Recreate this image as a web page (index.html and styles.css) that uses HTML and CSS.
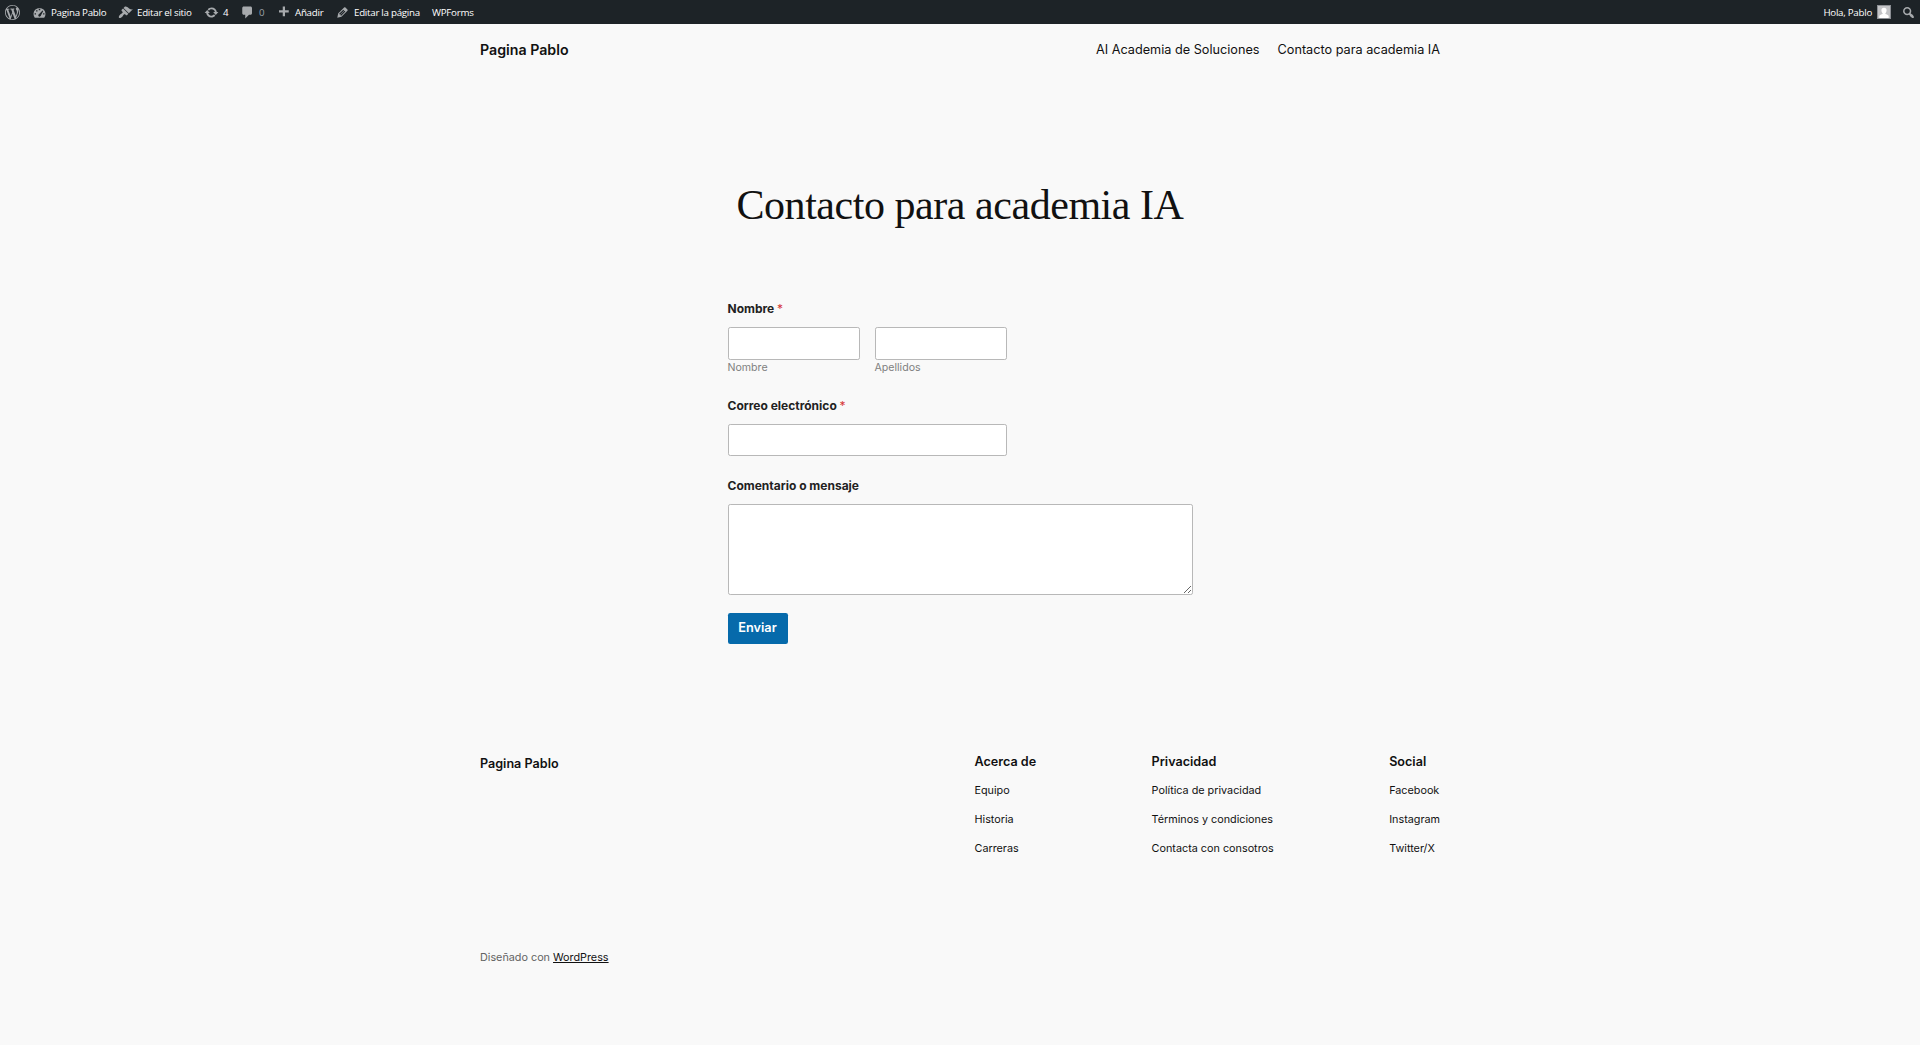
FILE: index.html
```
<!DOCTYPE html>
<html lang="es">
<head>
<meta charset="utf-8">
<title>Contacto para academia IA</title>
<link rel="stylesheet" href="styles.css">
</head>
<body>
<nav class="adminbar">
  <a class="item logo"><svg viewBox="0 0 20 20"><path d="M20 10c0-5.51-4.49-10-10-10C4.48 0 0 4.49 0 10c0 5.52 4.48 10 10 10 5.51 0 10-4.48 10-10zM7.78 15.37L4.37 6.22c.55-.02 1.17-.08 1.17-.08.5-.06.44-1.13-.06-1.11 0 0-1.45.11-2.37.11-.18 0-.37 0-.58-.01C4.12 2.69 6.87 1.11 10 1.11c2.33 0 4.45.87 6.05 2.34-.68-.11-1.65.39-1.65 1.58 0 .74.45 1.36.9 2.1.35.61.55 1.36.55 2.46 0 1.49-1.4 5-1.4 5l-3.03-8.37c.54-.02.82-.17.82-.17.5-.05.44-1.25-.06-1.22 0 0-1.44.12-2.38.12-.87 0-2.33-.12-2.33-.12-.5-.03-.56 1.2-.06 1.22l.92.08 1.26 3.41zM17.41 10c.24-.64.74-1.87.43-4.25.7 1.29 1.05 2.71 1.05 4.25 0 3.29-1.73 6.24-4.4 7.78.97-2.59 1.94-5.2 2.92-7.78zM6.1 18.09C3.12 16.65 1.11 13.53 1.11 10c0-1.3.23-2.48.72-3.59C3.25 10.3 4.67 14.2 6.1 18.09zm4.03-6.63l2.58 6.98c-.86.29-1.76.45-2.71.45-.79 0-1.57-.11-2.29-.33.81-2.38 1.62-4.74 2.42-7.1z"/></svg></a>
  <a class="item site"><svg viewBox="0 0 20 20"><path fill-rule="evenodd" d="M3.760 17h12.480A8 8 0 1 0 3.760 17zM9 5h2v2H9zM5.500 7h1.800v1.800H5.500zM14 7.200l1 .8-3 5.500A1.800 1.800 0 1 1 9.600 12zM3.500 11h1.800v1.800H3.500zM14.800 11h1.800v1.800h-1.800z"/></svg><span>Pagina Pablo</span></a>
  <a class="item edit-site"><svg viewBox="0 0 20 20"><path d="M14.48 11.06L7.41 3.99l1.5-1.5c.5-.56 2.3-.47 3.51.32 1.21.8 1.43 1.28 2.91 2.1 1.18.64 2.45 1.26 4.45.85zm-.71.71L6.7 4.7 4.93 6.47c-.39.39-.39 1.02 0 1.41l1.06 1.06c.39.39.39 1.03 0 1.42-.6.6-1.43 1.11-2.21 1.69-.35.26-.7.53-1.01.84C1.43 14.23.4 16.08 1.4 17.07c.99 1 2.84-.03 4.18-1.36.31-.31.58-.66.85-1.02.57-.78 1.08-1.61 1.69-2.21.39-.39 1.02-.39 1.41 0l1.06 1.06c.39.39 1.02.39 1.41 0z"/></svg><span>Editar el sitio</span></a>
  <a class="item updates"><svg viewBox="0 0 20 20"><path d="M10.2 3.28c3.53 0 6.43 2.61 6.92 6h2.08l-3.5 4-3.5-4h2.32c-.45-1.97-2.21-3.45-4.32-3.45-1.45 0-2.73.71-3.54 1.78L4.95 5.66C6.23 4.2 8.11 3.28 10.2 3.28zm-.4 13.44c-3.52 0-6.43-2.61-6.92-6H.8l3.5-4c1.17 1.33 2.33 2.67 3.5 4H5.48c.45 1.97 2.21 3.45 4.32 3.45 1.45 0 2.73-.71 3.54-1.78l1.71 1.95c-1.28 1.46-3.15 2.38-5.25 2.38z"/></svg><span>4</span></a>
  <a class="item comments"><svg viewBox="0 0 20 20"><path d="M5 2h9c1.100 0 2 .9 2 2v7c0 1.100-.9 2-2 2h-2l-5 5v-5H5c-1.100 0-2-.9-2-2V4c0-1.100.9-2 2-2z"/></svg><span>0</span></a>
  <a class="item add"><svg viewBox="0 0 20 20"><path d="M17 7v3h-5v5H9v-5H4V7h5V2h3v5h5z"/></svg><span>Añadir</span></a>
  <a class="item edit-page"><svg viewBox="0 0 20 20"><path d="M13.89 3.39l2.71 2.72c.46.46.42 1.24.03 1.64l-8.01 8.02-5.56 1.16 1.16-5.58s7.6-7.63 7.99-8.03c.39-.39 1.22-.39 1.68.07zm-2.73 2.79l-5.59 5.61 1.11 1.11 5.54-5.65zm-2.97 8.23l5.58-5.6-1.07-1.08-5.59 5.6z"/></svg><span>Editar la página</span></a>
  <a class="item wpforms">WPForms</a>
  <a class="item account">Hola, Pablo<svg class="avatar" viewBox="0 0 18 18"><path class="avatar-frame" d="M0 0h18v18H0z"/><path class="avatar-back" d="M1.300 1.300h15.400v15.400H1.300z"/><path class="avatar-person" d="M9 3.500a3.300 3.300 0 0 1 3.300 3.500c0 1.600-.7 2.700-1.500 3.500v1c1.500.6 3.700 1.200 4.200 2.700v2.500H3v-2.500c.5-1.500 2.700-2.100 4.200-2.700v-1C6.400 9.700 5.700 8.600 5.700 7A3.300 3.300 0 0 1 9 3.500z"/></svg></a>
  <a class="item search"><svg viewBox="0 0 20 20"><path d="M12.14 4.18c1.87 1.87 2.11 4.75.72 6.89.12.1.22.21.36.31.2.16.47.36.81.59.34.24.56.39.66.47.42.31.73.57.94.78.32.32.6.65.84 1 .25.35.44.69.59 1.04.14.35.21.68.18 1-.02.32-.14.59-.36.81s-.49.34-.81.36c-.31.02-.65-.04-.99-.19-.35-.14-.7-.34-1.04-.59-.35-.24-.68-.52-1-.84-.21-.21-.47-.52-.77-.93-.1-.13-.25-.35-.47-.66-.22-.32-.4-.57-.56-.78-.16-.2-.29-.35-.44-.5-2.07 1.09-4.69.76-6.44-.98-2.14-2.15-2.14-5.64 0-7.78 2.15-2.15 5.63-2.15 7.78 0zm-1.41 6.36c1.36-1.37 1.36-3.58 0-4.95-1.37-1.37-3.59-1.37-4.95 0-1.37 1.37-1.37 3.58 0 4.95 1.36 1.37 3.58 1.37 4.95 0z"/></svg></a>
</nav>
<header class="site-header">
  <a class="site-title">Pagina Pablo</a>
  <nav class="site-nav"><a>AI Academia de Soluciones</a><a>Contacto para academia IA</a></nav>
</header>
<main>
  <h1>Contacto para academia IA</h1>
  <form class="contact-form">
    <label class="label" for="first">Nombre <b class="required">*</b></label>
    <div class="name-row">
      <div class="name-field"><input id="first" type="text"><small>Nombre</small></div>
      <div class="name-field"><input id="last" type="text"><small>Apellidos</small></div>
    </div>
    <label class="label label-next" for="email">Correo electrónico <b class="required">*</b></label>
    <input id="email" class="email" type="text">
    <label class="label label-next" for="message">Comentario o mensaje</label>
    <textarea id="message"></textarea>
    <button type="button">Enviar</button>
  </form>
</main>
<footer class="site-footer">
  <div class="footer-top">
    <a class="footer-title">Pagina Pablo</a>
    <div class="footer-columns">
      <section><h2>Acerca de</h2><a>Equipo</a><a>Historia</a><a>Carreras</a></section>
      <section><h2>Privacidad</h2><a>Política de privacidad</a><a>Términos y condiciones</a><a>Contacta con consotros</a></section>
      <section><h2>Social</h2><a>Facebook</a><a>Instagram</a><a>Twitter/X</a></section>
    </div>
  </div>
  <p class="credit">Diseñado con <a>WordPress</a></p>
</footer>
</body>
</html>
```
FILE: styles.css
```
* { box-sizing: border-box; }

body {
  margin: 0;
  min-height: 1045px;
  background: #f9f9f9;
  color: #111;
  font-family: Inter, sans-serif;
}

/* Admin toolbar */
.adminbar {
  display: flex;
  align-items: center;
  height: 24px;
  background: #1d2327;
  color: #fff;
  font-family: "Open Sans", sans-serif;
  font-size: 9.75px;
  letter-spacing: -0.27px;
  line-height: 24px;
}
.item { display: flex; align-items: center; height: 24px; padding-top: 1px; white-space: nowrap; flex: none; }
.item svg { width: 15px; height: 15px; fill: #a7aaad; }
.item span { margin-left: 4.5px; }
.logo { width: 31.5px; padding-left: 5px; }
.site { width: 86px; }
.edit-site { width: 86px; }
.updates { width: 36px; }
.comments { width: 36px; color: #9ca2a7; }
.add { width: 59px; }
.edit-page { width: 97.5px; }
.account { margin-left: auto; width: 78px; justify-content: flex-end; padding-right: 10px; }
.account .avatar { width: 14px; height: 14px; margin-left: 5px; margin-top: -1px; }
.avatar .avatar-frame { fill: #8c8f94; }
.avatar .avatar-back { fill: #c3c4c7; }
.avatar .avatar-person { fill: #fff; }
.search { width: 19px; }

/* Site header */
.site-header {
  display: flex;
  justify-content: space-between;
  align-items: center;
  width: 960px;
  height: 52px;
  padding-bottom: 2px;
  margin: 0 auto;
}
.site-title { font-size: 14.2px; font-weight: 600; }
.site-nav { display: flex; gap: 18px; font-size: 12.7px; }

/* Contact form */
h1 {
  margin: 102px 0 0;
  height: 55px;
  font: 400 42px/54px "Liberation Serif", serif;
  letter-spacing: -0.45px;
  text-align: center;
}
.contact-form { width: 465px; margin: 68px auto 0; }
.label {
  display: block;
  height: 16px;
  line-height: 16px;
  margin-bottom: 10px;
  font-size: 12px;
  font-weight: 700;
  color: #222;
}
.required { color: #d63637; font-weight: 400; }
input, textarea {
  display: block;
  width: 100%;
  height: 33px;
  margin: 0;
  border: 1px solid #b8b8b8;
  border-radius: 2.25px;
  background: #fff;
}
.name-row { display: flex; gap: 15px; width: 279px; }
.name-field { flex: 1; }
small { display: block; height: 16px; line-height: 16px; font-size: 10.6px; color: #808080; }
.label-next { margin-top: 22px; }
.email { width: 279px; height: 32px; }
textarea { height: 91px; resize: vertical; }
button {
  display: block;
  width: 60px;
  height: 31px;
  margin-top: 18px;
  padding: 0 0 2px;
  border: 0;
  border-radius: 2.25px;
  background: #066aab;
  color: #fff;
  font: 600 12.75px/29px Inter, sans-serif;
}

/* Site footer */
.site-footer { width: 960px; margin: 108px auto 0; }
.footer-top { display: flex; justify-content: space-between; }
.footer-title { margin-top: 2px; font-size: 12.6px; font-weight: 600; line-height: 20px; }
.footer-columns { display: flex; justify-content: space-between; width: 465.5px; }
.footer-columns section { display: flex; flex-direction: column; gap: 9px; font-size: 10.8px; line-height: 20px; }
h2 { margin: 0; font-size: 12.6px; font-weight: 600; line-height: 20px; }
.credit { margin: 89px 0 0; font-size: 10.8px; line-height: 20px; color: #636363; }
.credit a { color: #111; text-decoration: underline; }
```
